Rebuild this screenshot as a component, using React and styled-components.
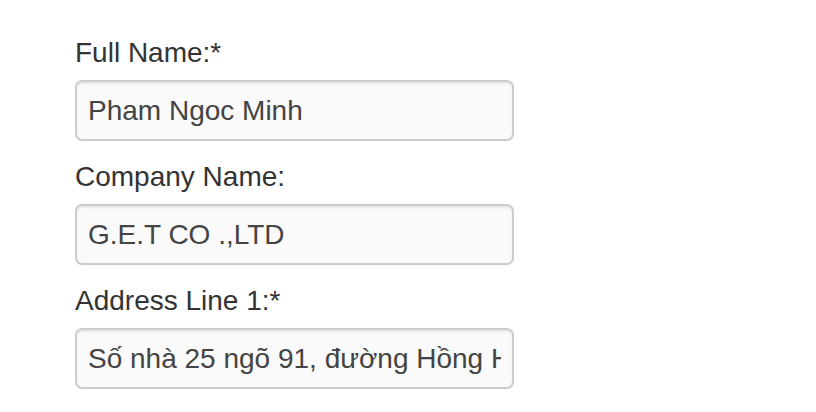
import styled, { createGlobalStyle } from "styled-components";

const GlobalStyle = createGlobalStyle`
  html, body {
    margin: 0;
    padding: 0;
    background: #fff;
  }
  body {
    font-family: "Liberation Sans", Arial, sans-serif;
    color: #333;
  }
`;

const Form = styled.form`
  display: flex;
  flex-direction: column;
  gap: 16px;
  padding: 33px 0 0 75px;
  width: 439px;
`;

const Group = styled.div`
  display: flex;
  flex-direction: column;
  gap: 7px;
`;

const Label = styled.label`
  font-size: 28px;
  line-height: 40px;
  font-weight: normal;
  color: #333;
`;

const Input = styled.input`
  box-sizing: border-box;
  width: 100%;
  height: 61px;
  margin: 0;
  padding: 0 11px;
  font-family: "Liberation Sans", Arial, sans-serif;
  font-size: 28px;
  color: #444;
  background: #fafafa;
  border: 2px solid #ccc;
  border-radius: 7px;
  box-shadow: inset 0 2px 2px rgba(0, 0, 0, 0.075);
  outline: none;
`;

const fields = [
  { id: "fullname", label: "Full Name:*", value: "Pham Ngoc Minh" },
  { id: "company", label: "Company Name:", value: "G.E.T CO .,LTD" },
  {
    id: "address1",
    label: "Address Line 1:*",
    value: "Số nhà 25 ngõ 91, đường Hồng Hà, quận Hoàn Kiếm, Hà Nội",
  },
];

const App = () => {
  return (
    <>
      <GlobalStyle />
      <Form onSubmit={(e) => e.preventDefault()}>
        {fields.map((field) => (
          <Group key={field.id}>
            <Label htmlFor={field.id}>{field.label}</Label>
            <Input id={field.id} type="text" defaultValue={field.value} />
          </Group>
        ))}
      </Form>
    </>
  );
};

export default App;
